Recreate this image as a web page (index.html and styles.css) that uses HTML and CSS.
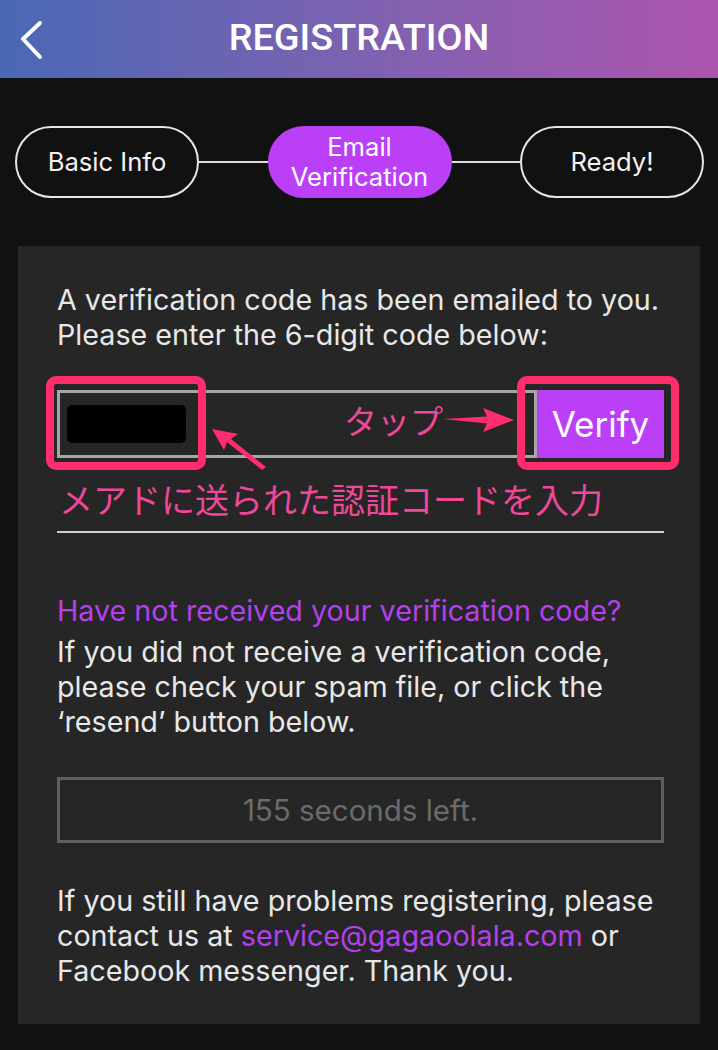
FILE: index.html
```html
<!DOCTYPE html>
<html lang="en">
<head>
<meta charset="utf-8">
<title>Registration</title>
<link rel="stylesheet" href="styles.css">
</head>
<body>
<header class="topbar">
  <a class="back" aria-label="Back">
    <svg width="26" height="40" viewBox="0 0 26 40"><path d="M21 3 L4 19 L21 37" fill="none" stroke="#fff" stroke-width="4" stroke-linecap="round" stroke-linejoin="round"/></svg>
  </a>
  <h1 class="title">REGISTRATION</h1>
  <span class="spacer"></span>
</header>

<nav class="steps">
  <div class="step">Basic Info</div>
  <div class="connector"></div>
  <div class="step active">Email<br>Verification</div>
  <div class="connector"></div>
  <div class="step">Ready!</div>
</nav>

<main class="card">
  <p class="text">A verification code has been emailed to you.<br>Please enter the 6-digit code below:</p>

  <div class="code-area">
    <div class="code-row">
      <div class="code-input"><span class="redacted"></span></div>
      <button class="verify">Verify</button>
    </div>
    <span class="mark mark-left"></span>
    <span class="mark mark-right"></span>
    <span class="note-tap">タップ</span>
    <svg class="arrow arrow-right" width="76" height="30" viewBox="0 0 76 30"><path d="M2 14 L46 11.5 L42 3 L73 15 L42 27 L46 18.5 Z" fill="#ff2d6e"/></svg>
    <svg class="arrow arrow-left" width="60" height="45" viewBox="0 0 60 45"><path d="M2 2 L28 7 L21 12 L56 40 L52 43 L17 15 L14 23 Z" fill="#ff2d6e"/></svg>
    <span class="note-input">メアドに送られた認証コードを入力</span>
  </div>
  <div class="underline"></div>

  <p class="help-title">Have not received your verification code?</p>
  <p class="text">If you did not receive a verification code,<br>please check your spam file, or click the<br>‘resend’ button below.</p>

  <div class="timer">155 seconds left.</div>

  <p class="text contact">If you still have problems registering, please<br>contact us at <a class="mail">service@gagaoolala.com</a> or<br>Facebook messenger. Thank you.</p>
</main>
</body>
</html>
```
FILE: styles.css
```css
* { box-sizing: border-box; }
html, body { margin: 0; padding: 0; }
body {
  background: #111111;
  width: 718px;
  height: 1050px;
  overflow: hidden;
  font-family: Inter, Roboto, "Noto Sans", "Liberation Sans", sans-serif;
  color: #e9e9e9;
}

.topbar {
  height: 78px;
  background: linear-gradient(90deg, #4a68b5 0%, #7d62b1 50%, #ad55ae 100%);
  display: grid;
  grid-template-columns: 1fr auto 1fr;
  align-items: center;
}
.back {
  display: flex;
  align-items: center;
  padding-left: 19px;
  padding-top: 1px;
}
.title {
  margin: 0;
  color: #ffffff;
  font-family: Roboto, "Noto Sans", sans-serif;
  font-size: 37.8px;
  font-weight: 500;
  line-height: 44px;
  padding-bottom: 4px;
}

.steps {
  display: flex;
  align-items: center;
  padding: 48px 14px 0 15px;
}
.step {
  width: 184px;
  height: 72px;
  border: 2px solid #e6e6e6;
  border-radius: 36px;
  display: flex;
  align-items: center;
  justify-content: center;
  text-align: center;
  font-size: 25.6px;
  line-height: 30px;
  color: #f2f2f2;
  flex: none;
}
.step.active {
  background: #bb3ff7;
  border-color: #bb3ff7;
  color: #ffffff;
}
.connector {
  flex: 1;
  height: 2px;
  background: #dddddd;
}

.card {
  margin: 48px 18px 0 18px;
  height: 778px;
  background: #262626;
  padding: 36px 30px 0 39px;
}
.text {
  margin: 0;
  font-size: 28.7px;
  line-height: 35px;
  color: #e8e8e8;
  white-space: nowrap;
}

.code-area {
  position: relative;
  margin-top: 38px;
  margin-right: 6px;
  height: 68px;
}
.code-row {
  display: flex;
  height: 68px;
}
.code-input {
  flex: 1;
  border: 3px solid #a6a6a6;
  background: #262626;
  display: flex;
  align-items: center;
  padding-left: 7px;
}
.redacted {
  width: 119px;
  height: 38px;
  background: #000;
  border-radius: 5px;
}
.verify {
  width: 127px;
  height: 68px;
  border: none;
  background: #bb3ff7;
  color: #ffffff;
  font-family: Inter, Roboto, sans-serif;
  font-size: 35px;
  padding: 0;
  margin: 0;
}

.mark {
  position: absolute;
  border: 8px solid #ff2d6e;
  border-radius: 10px;
}
.mark-left { left: -11px; top: -14px; width: 160px; height: 94px; }
.mark-right { left: 460px; top: -14px; width: 162px; height: 94px; }

.note-tap {
  position: absolute;
  left: 287px;
  top: 10px;
  font-family: "Noto Sans CJK JP", sans-serif;
  font-size: 33px;
  line-height: 40px;
  color: #f0479a;
}
.arrow { position: absolute; }
.arrow-right { left: 384px; top: 15px; }
.arrow-left { left: 153px; top: 37px; }
.note-input {
  position: absolute;
  left: 2px;
  top: 87px;
  white-space: nowrap;
  font-family: "Noto Sans CJK JP", sans-serif;
  font-size: 34px;
  line-height: 44px;
  color: #f0479a;
}

.underline {
  margin-top: 73px;
  margin-right: 6px;
  height: 2px;
  background: #d0d0d0;
}

.help-title {
  margin: 60px 0 6px 0;
  font-size: 28.7px;
  line-height: 35px;
  color: #b440ee;
  white-space: nowrap;
}

.timer {
  margin-top: 38px;
  margin-right: 6px;
  height: 66px;
  border: 3px solid #5f5f5f;
  display: flex;
  align-items: center;
  justify-content: center;
  font-size: 29.5px;
  color: #6b6b6b;
}

.contact { margin-top: 40px; }
.mail { color: #b440ee; text-decoration: none; }
```
